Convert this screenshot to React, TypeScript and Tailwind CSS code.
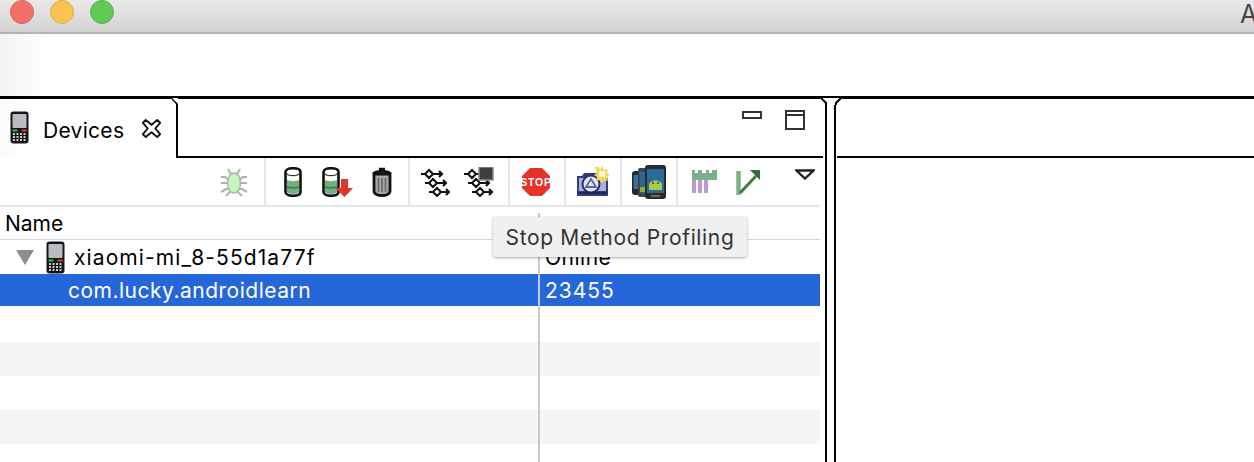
const sans = "font-['Inter','Noto_Sans',sans-serif]";

const Phone = () => (
  <svg width="19" height="33" viewBox="0 0 19 33" className="shrink-0">
    <rect x="0.5" y="0.5" width="18" height="32" rx="3" fill="#161616" />
    <rect x="2.5" y="3" width="14" height="14" rx="1" fill="#b9bdc1" />
    <rect x="2.5" y="18.5" width="5" height="2" fill="#35c24a" />
    <rect x="11.5" y="18.5" width="5" height="2" fill="#e2403a" />
    {[22, 25, 28].map((y) =>
      [3, 6.5, 10, 13.5].map((x) => (
        <rect key={`${x}-${y}`} x={x} y={y} width="2" height="2" fill="#c9c9c9" />
      )),
    )}
  </svg>
);

const Bug = () => (
  <svg width="28" height="30" viewBox="0 0 28 30">
    <g stroke="#b0b4ae" strokeWidth="2.2" fill="none">
      <path d="M8 2l3 5M20 2l-3 5M1 10h4l4 3M27 10h-4l-4 3M1 16h26M1 25l5-3h3M27 25l-5-3h-3M6 29l4-4M22 29l-4-4" />
    </g>
    <ellipse cx="14" cy="16" rx="6.5" ry="10" fill="#c6f5c0" stroke="#a3bd9f" strokeWidth="1.5" />
  </svg>
);

const Jar = () => (
  <>
    <path d="M1.500 5c0-5 15-5 15 0v20c0 5-15 5-15 0z" fill="#fff" stroke="#111" strokeWidth="2.600" />
    <path d="M2 6c2 3.500 12 3.500 14 0" stroke="#333" strokeWidth="1.400" fill="none" />
    <path d="M3 13c3 1.500 9 1.500 12 0v12c-1 2.500-11 2.500-12 0z" fill="#72b080" />
    <path d="M3 20c3 1 9 1 12 0" stroke="#447f52" strokeWidth="2.200" fill="none" />
  </>
);

const Cylinder = () => (
  <svg width="18" height="30" viewBox="0 0 18 30">
    <Jar />
  </svg>
);

const CylinderDown = () => (
  <svg width="31" height="30" viewBox="0 0 31 30">
    <Jar />
    <path d="M19 12h7v9h5l-8.500 9-9-9h5.500z" fill="#e0352b" />
  </svg>
);

const Trash = () => (
  <svg width="20" height="30" viewBox="0 0 20 30">
    <path d="M7 2h6M1.500 7c2-3.500 15-3.500 17 0" stroke="#111" strokeWidth="2.600" fill="none" />
    <path d="M2 7h16v17c0 6-16 6-16 0z" fill="#a8a8a8" stroke="#111" strokeWidth="2.800" />
    <path d="M6.500 11v14M10 11v14M13.500 11v14" stroke="#6a6a6a" strokeWidth="1.700" />
  </svg>
);

const threadRows = (
  <g stroke="#111" strokeWidth="2.100" fill="none">
    <path d="M0 7h4l4-4 4 4-4 4-4-4M12 7h9M18 4l3 3-3 3" />
    <path d="M4 16h4l4-4 4 4-4 4-4-4M16 16h9M22 13l3 3-3 3" />
    <path d="M8 25h4l4-4 4 4-4 4-4-4M20 25h8M25 22l3 3-3 3" />
  </g>
);

const Threads = () => (
  <svg width="29" height="30" viewBox="0 0 29 30">
    {threadRows}
  </svg>
);

const ThreadsStop = () => (
  <svg width="30" height="30" viewBox="0 0 30 30">
    {threadRows}
    <rect x="15" y="0" width="14" height="13" fill="#3d3d3d" stroke="#8c8c8c" strokeWidth="1.500" />
  </svg>
);

const Stop = () => (
  <svg width="30" height="30" viewBox="0 0 30 30">
    <path d="M9 1h12l8 8v12l-8 8H9l-8-8V9z" fill="#e5322b" />
    <text x="15" y="19" textAnchor="middle" fontSize="10.500" fontWeight="800" fill="#fff" letterSpacing="0.800" fontFamily="Liberation Sans, sans-serif">STOP</text>
  </svg>
);

const Camera = () => (
  <svg width="33" height="32" viewBox="0 0 33 32">
    <path d="M1 10h5l2-3h16v23H1z" fill="#2f3d80" />
    <rect x="24" y="12" width="8" height="18" fill="#2f3d80" />
    <rect x="3" y="12" width="27" height="13" fill="#aab2d0" />
    <circle cx="15" cy="18" r="8.500" fill="#e4e7f1" stroke="#27316f" strokeWidth="2" />
    <path d="M15 13l5 8H10z" fill="none" stroke="#5b668f" strokeWidth="1.800" />
    <path d="M2 27h29" stroke="#1d2560" strokeWidth="2" />
    <path d="M19 1h4l1 3 2-4 2 4 4-1-1 4 3 2-3 2 1 4-4-1-2 3-2-3-4 1 1-4-3-2 3-2z" fill="#f4d94e" />
    <rect x="23" y="5" width="6" height="6" fill="#fffbe0" />
  </svg>
);

const Android = () => (
  <svg width="34" height="34" viewBox="0 0 34 34">
    <rect x="0" y="6" width="9" height="24" rx="3" fill="#1e2a30" />
    <rect x="1.500" y="10" width="5" height="14" fill="#3a6f99" />
    <rect x="6" y="3" width="10" height="29" rx="2" fill="#39464d" />
    <rect x="8" y="7" width="6" height="21" fill="#2d6490" />
    <path d="M8 27v-5h6v5z" fill="#8ea83a" />
    <rect x="13" y="0" width="21" height="34" rx="3" fill="#2c2a28" />
    <rect x="15" y="4" width="17" height="24" fill="#2a6a9f" />
    <path d="M17 25v-5c0-6 13-6 13 0v5z" fill="#b0ca3e" />
    <rect x="20" y="17" width="2" height="2" fill="#2a6a9f" />
    <rect x="25" y="17" width="2" height="2" fill="#2a6a9f" />
    <rect x="19" y="30" width="9" height="2" fill="#7a675a" />
  </svg>
);

const Heap = () => (
  <svg width="26" height="24" viewBox="0 0 26 24">
    <path d="M0 8h4v15H0zM6 8h4v15H6zM12 8h4v15h-4z" fill="#b79ad6" />
    <path d="M0 0h3v3h3V0h4v3h4V0h3v3h3V0h5v10H0z" fill="#78b286" />
  </svg>
);

const ArrowChart = () => (
  <svg width="25" height="26" viewBox="0 0 25 26">
    <path d="M2.500 2v24" stroke="#80b080" strokeWidth="4.500" />
    <path d="M4 24L20 7" stroke="#3d7d45" strokeWidth="3" />
    <path d="M14 1h10v10z" fill="#2f6d38" />
  </svg>
);

const Tool = ({ children, className }: { children: React.ReactNode; className: string }) => (
  <div className={`flex h-full items-center ${className}`}>{children}</div>
);

export default function App() {
  return (
    <div className={`relative flex h-[462px] w-[1254px] flex-col overflow-hidden bg-white text-black ${sans}`}>
      {/* title bar */}
      <div className="flex h-[34px] shrink-0 items-start gap-[16px] border-b-2 border-[#b3b3b3] bg-gradient-to-b from-[#e9e9e9] to-[#d3d3d3] pl-[10px]">
        <span className="h-6 w-6 shrink-0 rounded-full border border-[#e0605a] bg-[#f2706a]" />
        <span className="h-6 w-6 shrink-0 rounded-full border border-[#e6ad45] bg-[#f8c350]" />
        <span className="h-6 w-6 shrink-0 rounded-full border border-[#58b24f] bg-[#62c956]" />
        <span className="ml-[1110px] mt-[2px] shrink-0 whitespace-nowrap text-[25px] leading-none text-[#444]">A</span>
      </div>
      <div className="h-[62px] shrink-0 bg-gradient-to-r from-[#f4f4f4] to-white to-[4%]" />

      <div className="flex min-h-0 flex-1 border-t-[3px] border-black">
        {/* devices view */}
        <div className="flex w-[827px] shrink-0 flex-col border-r-2 border-black">
          <div className="flex h-[59px] shrink-0">
            <div className="flex w-[178px] items-center border-r-2 border-black bg-gradient-to-r from-[#fbfbfb] to-white to-[30%] pb-[2px] pl-[10px]">
              <Phone />
              <span className="ml-[14px] mt-[5px] text-[21px] leading-none tracking-[0.3px]">Devices</span>
              <svg width="21" height="21" viewBox="0 0 22 22" className="ml-[17px] mt-[1px]">
                <path d="M2 5l3-3 6 5 6-5 3 3-5 6 5 6-3 3-6-5-6 5-3-3 5-6z" fill="#fff" stroke="#111" strokeWidth="2" strokeLinejoin="round" />
              </svg>
            </div>
            <div className="mr-[2px] flex flex-1 items-start border-b-2 border-black pl-[564px] pt-[11px]">
              <span className="mt-[1px] h-[8px] w-[20px] border-2 border-[#333] bg-white" />
              <span className="ml-[23px] h-[20px] w-[20px] border-2 border-[#333] bg-white">
                <span className="block h-[4px] border-b-2 border-[#333]" />
              </span>
            </div>
          </div>

          <div className="flex h-[49px] w-[820px] shrink-0 border-b-2 border-[#e6e6e6]">
            <Tool className="w-[266px] justify-end border-r-2 border-[#e6e6e6] pr-[16px]"><Bug /></Tool>
            <Tool className="w-[144px] border-r-2 border-[#e6e6e6] pl-[18px]">
              <Cylinder />
              <span className="ml-[20px]"><CylinderDown /></span>
              <span className="ml-[19px]"><Trash /></span>
            </Tool>
            <Tool className="w-[100px] border-r-2 border-[#e6e6e6] pl-[11px]">
              <Threads />
              <span className="ml-[14px]"><ThreadsStop /></span>
            </Tool>
            <Tool className="w-[56px] border-r-2 border-[#e6e6e6] pl-[11px]"><Stop /></Tool>
            <Tool className="w-[56px] border-r-2 border-[#e6e6e6] pl-[10px]"><Camera /></Tool>
            <Tool className="w-[56px] border-r-2 border-[#e6e6e6] pl-[10px]"><Android /></Tool>
            <Tool className="flex-1 pl-[14px]">
              <Heap />
              <span className="ml-[18px]"><ArrowChart /></span>
              <svg width="20" height="11" viewBox="0 0 20 11" className="mb-[15px] ml-[34px]">
                <path d="M1.500 1.500h17L10 9.500z" fill="#fff" stroke="#222" strokeWidth="2.400" />
              </svg>
            </Tool>
          </div>

          {/* device table */}
          <div className="relative w-[820px] flex-1 text-[21px] leading-none">
            <div className="flex h-[33px] items-center border-b border-[#d6d6d6] pl-[5px]">Name</div>
            <div className="flex h-[34px] items-center pl-[16px]">
              <svg width="18" height="15" viewBox="0 0 18 15"><path d="M0 0h18L9 15z" fill="#8e8e8e" /></svg>
              <span className="ml-[12px]"><Phone /></span>
              <span className="ml-[9px] tracking-[1.1px]">xiaomi-mi_8-55d1a77f</span>
              <span className="absolute left-[545px] tracking-[0.5px]">Online</span>
            </div>
            <div className="flex h-[32px] items-center bg-[#2566d8] pl-[68px] tracking-[0.5px] text-white">
              com.lucky.androidlearn
              <span className="absolute left-[545px] tracking-[1px]">23455</span>
            </div>
            <div className="h-[36px]" />
            <div className="h-[34px] bg-[#f5f5f5]" />
            <div className="h-[34px]" />
            <div className="h-[34px] bg-[#f5f5f5]" />
            <span className="absolute bottom-0 left-[538px] top-[6px] w-[2px] bg-[#c9c9c9]" />
          </div>
        </div>

        {/* right view */}
        <div className="ml-[7px] flex-1 border-l-2 border-black">
          <div className="ml-[1px] mt-[57px] h-[2px] bg-black" />
        </div>
      </div>

      {/* tab corner and sash notch */}
      <svg width="6" height="6" viewBox="0 0 6 6" className="absolute left-[172px] top-[98px]">
        <path d="M0 0h6v6z" fill="#fff" />
        <path d="M0 1l5 5" stroke="#000" strokeWidth="1.500" fill="none" />
      </svg>
      <svg width="22" height="7" viewBox="0 0 22 7" className="absolute left-[820px] top-[98px]">
        <path d="M0 0h22l-5 5v2H7V5z" fill="#fff" />
        <path d="M1 0l5 5v2M21 0l-5 5v2" stroke="#000" strokeWidth="2" fill="none" />
      </svg>

      {/* tooltip */}
      <div className="absolute left-[493px] top-[217px] flex h-[40px] w-[254px] items-center justify-center rounded-[2px] bg-[#f0f0f0] text-[21px] leading-none tracking-[0.65px] text-[#333] shadow-[0_1px_3px_rgba(0,0,0,0.35)]">
        Stop Method Profiling
      </div>
    </div>
  );
}
